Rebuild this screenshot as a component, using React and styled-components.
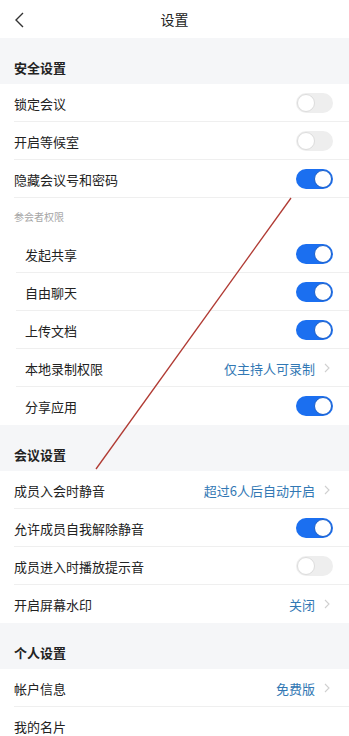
import styled, { createGlobalStyle } from "styled-components";

const GlobalStyle = createGlobalStyle`
  html, body {
    margin: 0;
    padding: 0;
    background: #f5f6f8;
  }
  body {
    font-family: "Noto Sans CJK SC", "Noto Sans", sans-serif;
    color: #1f1f1f;
  }
`;

const Page = styled.div`
  position: relative;
  width: 349px;
  height: 736px;
  overflow: hidden;
  background: #f5f6f8;
`;

const TopBar = styled.div`
  height: 38px;
  background: #fff;
  display: flex;
  align-items: center;
  justify-content: center;
  position: relative;
`;

const BackButton = styled.div`
  position: absolute;
  left: 13px;
  top: 11px;
  width: 14px;
  height: 18px;
  display: flex;
`;

const Title = styled.div`
  font-size: 14px;
  color: #222;
`;

const SectionHead = styled.div`
  height: 46px;
  box-sizing: border-box;
  display: flex;
  align-items: flex-end;
  padding: 0 14px 6px;
  font-size: 13px;
  font-weight: 700;
  line-height: 20px;
  color: #222;
`;

const Group = styled.div`
  background: #fff;
`;

const Row = styled.div`
  height: 38px;
  display: flex;
  align-items: center;
  padding: 0 16px 0 ${(p) => (p.$sub ? 25 : 14)}px;
  position: relative;
  font-size: 13px;
  color: #222;

  &::after {
    content: "";
    display: ${(p) => (p.$last ? "none" : "block")};
    position: absolute;
    left: ${(p) => (p.$sub ? 16 : 14)}px;
    right: 0;
    bottom: 0;
    height: 1px;
    background: #efefef;
  }
`;

const Label = styled.div`
  flex: 1;
`;

const SubHead = styled.div`
  height: 37px;
  display: flex;
  align-items: center;
  padding: 0 14px;
  font-size: 10px;
  color: #a5a5a5;
`;

const Value = styled.div`
  display: flex;
  align-items: center;
  gap: 9px;
  margin-right: 3px;
  color: #3278b4;
  font-size: 13px;
`;

const Toggle = styled.div`
  width: 37px;
  height: 20px;
  border-radius: 10px;
  box-sizing: border-box;
  background: ${(p) => (p.$on ? "#1b6ff0" : "#eeeeee")};
  position: relative;

  &::after {
    content: "";
    position: absolute;
    top: 1px;
    ${(p) => (p.$on ? "right: 1px;" : "left: 1px;")}
    width: 18px;
    height: 18px;
    border-radius: 50%;
    background: #fff;
    box-sizing: border-box;
    border: 1px solid ${(p) => (p.$on ? "#1b5fc8" : "#dcdcdc")};
  }
`;

const Annotation = styled.svg`
  position: absolute;
  left: 0;
  top: 0;
  pointer-events: none;
`;

const Chevron = () => (
  <svg width="6" height="10" viewBox="0 0 6 10">
    <path d="M1 1l4 4-4 4" fill="none" stroke="#d0d0d0" strokeWidth="1.1" />
  </svg>
);

function SettingRow({ label, on, value, sub, last }) {
  return (
    <Row $sub={sub} $last={last}>
      <Label>{label}</Label>
      {value ? (
        <Value>
          {value}
          <Chevron />
        </Value>
      ) : on !== undefined ? (
        <Toggle $on={on} />
      ) : null}
    </Row>
  );
}

export default function App() {
  return (
    <Page>
      <GlobalStyle />
      <TopBar>
        <BackButton>
          <svg width="14" height="18" viewBox="0 0 14 18">
            <path d="M10 2L3 9l7 7" fill="none" stroke="#333" strokeWidth="1.4" />
          </svg>
        </BackButton>
        <Title>设置</Title>
      </TopBar>

      <SectionHead>安全设置</SectionHead>
      <Group>
        <SettingRow label="锁定会议" on={false} />
        <SettingRow label="开启等候室" on={false} />
        <SettingRow label="隐藏会议号和密码" on />
        <SubHead>参会者权限</SubHead>
        <SettingRow sub label="发起共享" on />
        <SettingRow sub label="自由聊天" on />
        <SettingRow sub label="上传文档" on />
        <SettingRow sub label="本地录制权限" value="仅主持人可录制" />
        <SettingRow sub label="分享应用" on last />
      </Group>

      <SectionHead>会议设置</SectionHead>
      <Group>
        <SettingRow label="成员入会时静音" value="超过6人后自动开启" />
        <SettingRow label="允许成员自我解除静音" on />
        <SettingRow label="成员进入时播放提示音" on={false} />
        <SettingRow label="开启屏幕水印" value="关闭" last />
      </Group>

      <SectionHead>个人设置</SectionHead>
      <Group>
        <SettingRow label="帐户信息" value="免费版" />
        <SettingRow label="我的名片" last />
      </Group>

      <Annotation width="349" height="736">
        <line x1="291" y1="198" x2="96" y2="469" stroke="#b03a33" strokeWidth="1.3" />
      </Annotation>
    </Page>
  );
}
